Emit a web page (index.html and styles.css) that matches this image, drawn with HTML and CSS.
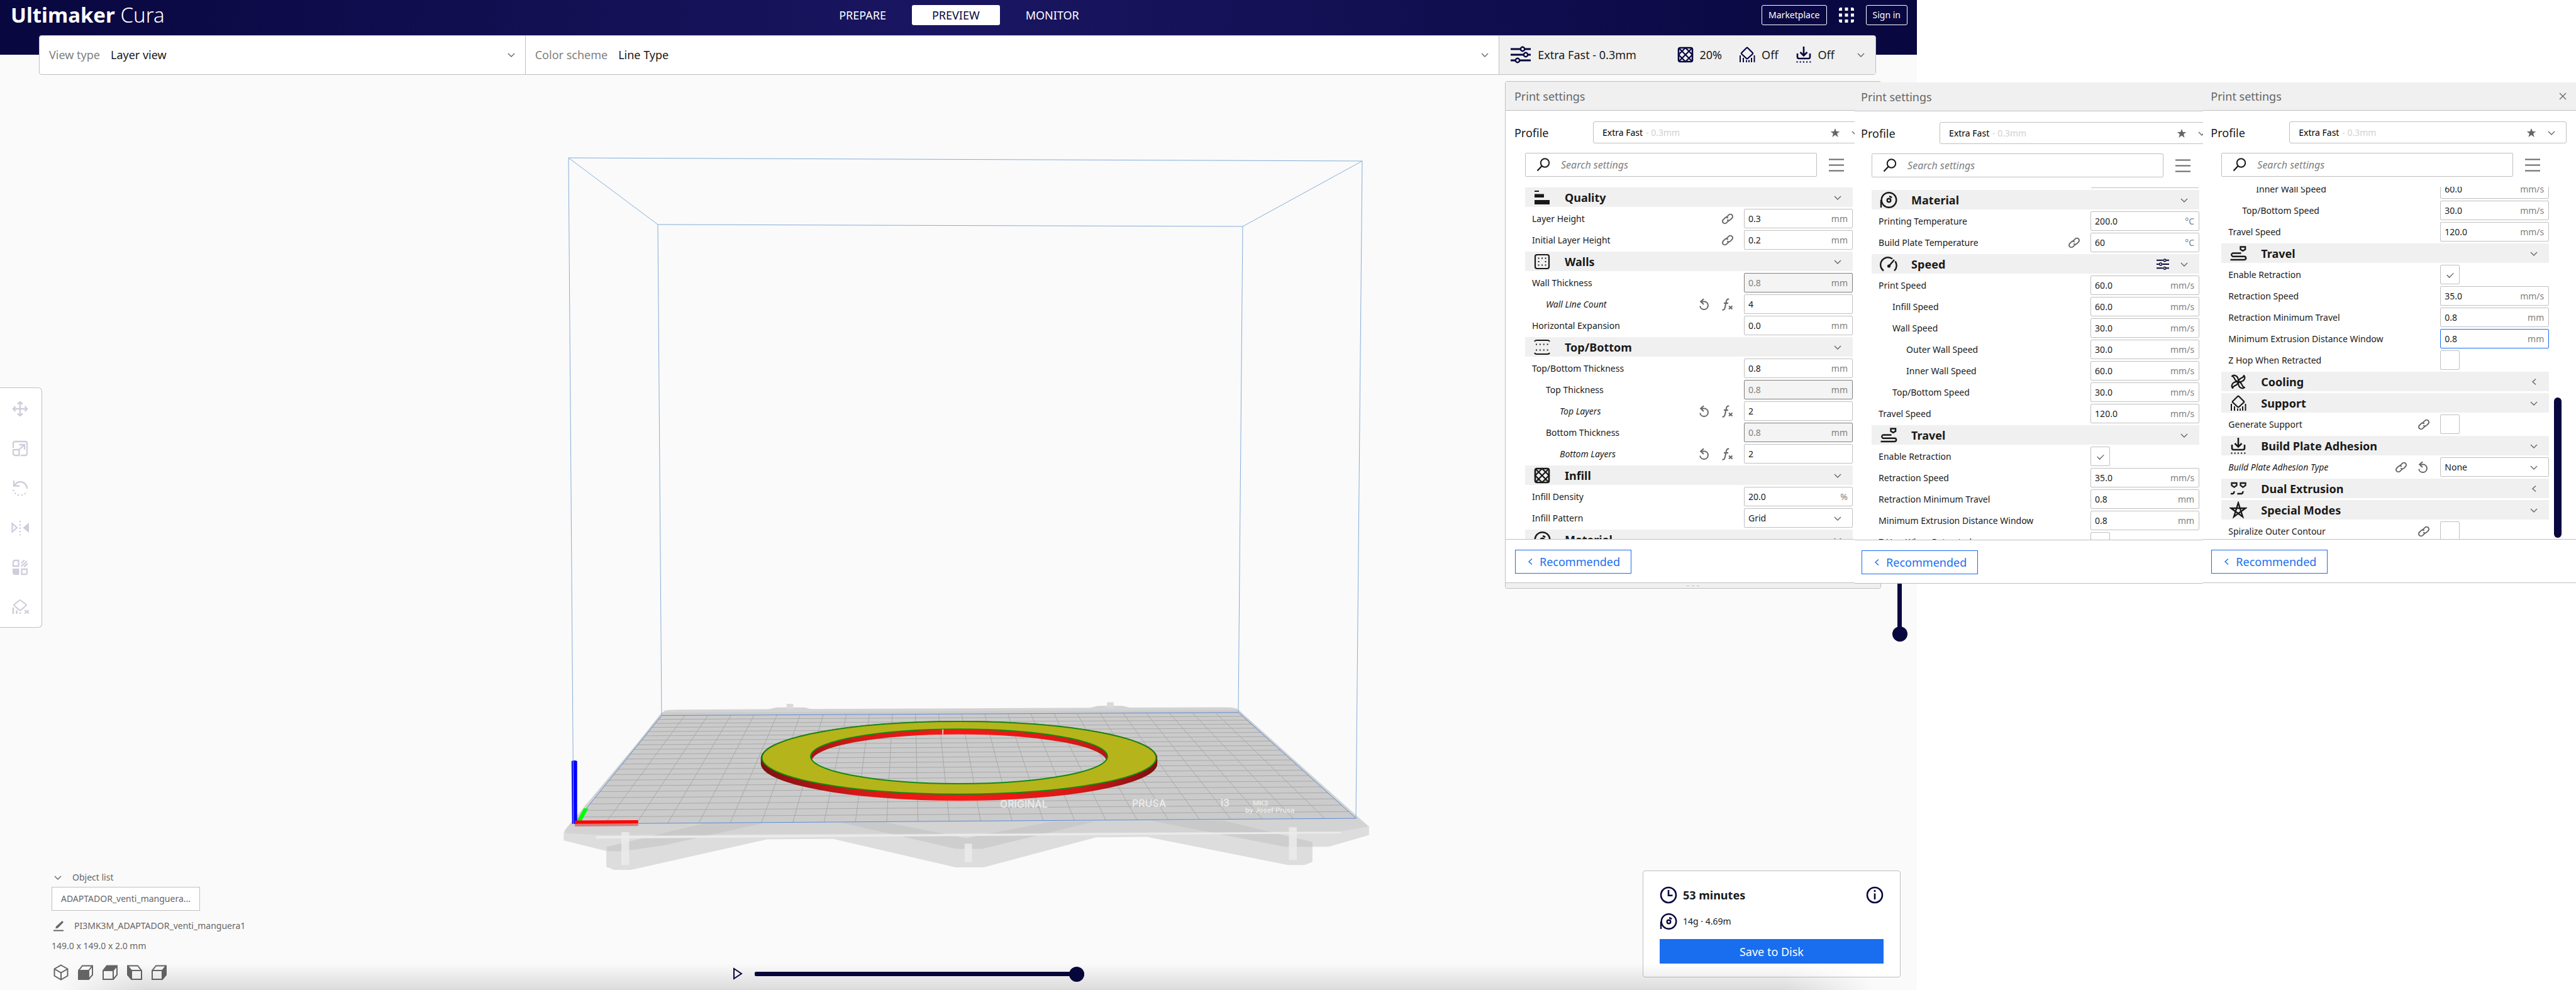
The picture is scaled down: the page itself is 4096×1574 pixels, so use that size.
FILE: index.html
```html
<!DOCTYPE html>
<html lang="en">
<head>
<meta charset="utf-8">
<title>Ultimaker Cura</title>
<link rel="stylesheet" href="styles.css">
<script src="scene.js" defer></script>
</head>
<body>
<svg class="sprite" aria-hidden="true">
  <symbol id="i-down" viewBox="0 0 12 12"><path d="M1 4l5 5 5-5" fill="none" stroke="currentColor" stroke-width="1.4"/></symbol>
  <symbol id="i-left" viewBox="0 0 12 12"><path d="M9 1.5L4 6l5 4.500" fill="none" stroke="currentColor" stroke-width="1.4"/></symbol>
  <symbol id="i-close" viewBox="0 0 12 12"><path d="M1 1l10 10M11 1L1 11" fill="none" stroke="currentColor" stroke-width="1.300"/></symbol>
  <symbol id="i-star" viewBox="0 0 16 16"><path d="M8 1l2 5h5.300l-4.200 3.300L12.600 15 8 11.500 3.400 15l1.500-5.700L.700 6H6z" fill="currentColor"/></symbol>
  <symbol id="i-search" viewBox="0 0 24 24"><circle cx="14.500" cy="9" r="6.700" fill="none" stroke="currentColor" stroke-width="2"/><path d="M9.500 14L2.500 21.500" stroke="currentColor" stroke-width="2.200"/></symbol>
  <symbol id="i-menu" viewBox="0 0 24 24"><path d="M0 3.500h24M0 12.500h24M0 21.500h24" stroke="currentColor" stroke-width="2"/></symbol>
  <symbol id="i-link" viewBox="0 0 20 20"><g fill="none" stroke="currentColor" stroke-width="1.900" stroke-linecap="round"><path d="M8.300 7.200l3.400-3.400a3.600 3.600 0 0 1 5.300 0 3.500 3.500 0 0 1 0 5l-2.600 2.600a3.600 3.600 0 0 1-4.600.300"/><path d="M11.700 12.800l-3.400 3.400a3.600 3.600 0 0 1-5.300 0 3.500 3.500 0 0 1 0-5l2.600-2.600a3.600 3.600 0 0 1 4.600-.300"/></g></symbol>
  <symbol id="i-reset" viewBox="0 0 20 20"><path d="M3 5.600h7.500a6.400 6.400 0 1 1-8.300 7" fill="none" stroke="currentColor" stroke-width="2"/><path d="M8 1.200L3.200 5.600 8 10" fill="none" stroke="currentColor" stroke-width="2"/></symbol>
  <symbol id="i-fx" viewBox="0 0 20 20"><g fill="none" stroke="currentColor" stroke-width="2"><path d="M1.500 18.600c3 .600 3.800-1 4.500-4.400l1.900-8.900c.500-2.800 1.600-4.200 4.400-3.500M4 8h7"/><path d="M12 12.500l5.500 5M17.500 12.500l-5.500 5"/></g></symbol>
  <symbol id="i-sliders" viewBox="0 0 32 28"><g fill="none" stroke="currentColor" stroke-width="3"><path d="M0 5h15M23 5h9M0 14h20M28 14h4M0 23h7M15 23h17"/><circle cx="19" cy="5" r="3.200" stroke-width="2.400"/><circle cx="24" cy="14" r="3.200" stroke-width="2.400"/><circle cx="11" cy="23" r="3.200" stroke-width="2.400"/></g></symbol>
  <symbol id="i-tune" viewBox="0 0 32 28"><g fill="none" stroke="currentColor" stroke-width="3"><path d="M0 4h16M25 4h7M0 14h6M15 14h17M0 24h16M25 24h7"/><circle cx="21" cy="4" r="3" stroke-width="2.400"/><circle cx="10.500" cy="14" r="3.200" stroke-width="2.400"/><circle cx="21" cy="24" r="3" stroke-width="2.400"/></g></symbol>
  <symbol id="i-apps" viewBox="0 0 24 24"><path d="M0 5V3a3 3 0 0 1 3-3h2v5zM9.500 0h5v5h-5zM19 0h2a3 3 0 0 1 3 3v2h-5zM0 9.500h5v5H0zM9.500 9.500h5v5h-5zM19 9.500h5v5h-5zM0 19h5v5H3a3 3 0 0 1-3-3zM9.500 19h5v5h-5zM19 19h5v2a3 3 0 0 1-3 3h-2z" fill="currentColor"/></symbol>
  <symbol id="i-quality" viewBox="0 0 28 28"><path d="M2 3h7v2H2zM2 8.500h15V14H2zM2 18h24v7H2z" fill="currentColor"/></symbol>
  <symbol id="i-walls" viewBox="0 0 28 28"><rect x="3" y="3" width="22" height="22" rx="3" fill="none" stroke="currentColor" stroke-width="2.200"/><path d="M7.600 8.500h13M7.600 19.500h13" stroke="currentColor" stroke-width="1.900" stroke-dasharray="1.900 3.600"/><path d="M8.500 13v2M19.600 13v2" stroke="currentColor" stroke-width="1.900"/></symbol>
  <symbol id="i-topbottom" viewBox="0 0 28 28"><path d="M2 5q1-2 3-2h18q2 0 3 2M2 23q1 2 3 2h18q2 0 3-2" fill="none" stroke="currentColor" stroke-width="2.200"/><path d="M4 9.500h20M4 18.500h20" stroke="currentColor" stroke-width="1.900" stroke-dasharray="1.900 4"/></symbol>
  <symbol id="i-infill" viewBox="0 0 28 28"><rect x="3" y="3" width="22" height="22" rx="2.500" fill="none" stroke="currentColor" stroke-width="2.600"/><path d="M3 14L14 3l11 11-11 11zM4 4l20 20M24 4L4 24" fill="none" stroke="currentColor" stroke-width="2.200"/></symbol>
  <symbol id="i-material" viewBox="0 0 28 28"><g fill="none" stroke="currentColor"><circle cx="14.500" cy="14" r="11.800" stroke-width="2.400"/><path d="M2 14v12" stroke-width="2.400"/><circle cx="14.500" cy="14.500" r="2.800" stroke-width="2.400"/><path d="M15 8.300q2.500.200 4 2" stroke-width="2.600"/></g></symbol>
  <symbol id="i-speed" viewBox="0 0 28 28"><g fill="none" stroke="currentColor" stroke-width="2.400"><path d="M6 24.500A11.500 11.500 0 0 1 20 5.500M24.500 9.500A11.500 11.500 0 0 1 23 24.500"/><path d="M15 16.500L23 7"/></g><circle cx="14.500" cy="17" r="2.600" fill="currentColor"/></symbol>
  <symbol id="i-travel" viewBox="0 0 28 28"><g fill="none" stroke="currentColor" stroke-width="2.400"><path d="M17.500 3.500h7.600v4l-3.800 2.300-3.800-2.300zM18.500 13.500H5a2.800 2.800 0 0 0 0 5.200h18.500a2.500 2.500 0 0 1 0 5.300H1.500"/></g></symbol>
  <symbol id="i-cooling" viewBox="0 0 28 28"><g fill="none" stroke="currentColor" stroke-width="2.200" stroke-linejoin="round"><path d="M14 14C14.500 9 12.500 4.500 8.500 3.800 6.500 3.500 5 4 4 5 7 5.500 7.500 8 8.500 10 9.500 12.200 11.500 13.500 14 14z"/><path transform="rotate(90 14 14)" d="M14 14C14.500 9 12.500 4.500 8.500 3.800 6.500 3.500 5 4 4 5 7 5.500 7.500 8 8.500 10 9.500 12.200 11.500 13.500 14 14z"/><path transform="rotate(180 14 14)" d="M14 14C14.500 9 12.500 4.500 8.500 3.800 6.500 3.500 5 4 4 5 7 5.500 7.500 8 8.500 10 9.500 12.200 11.500 13.500 14 14z"/><path transform="rotate(270 14 14)" d="M14 14C14.500 9 12.500 4.500 8.500 3.800 6.500 3.500 5 4 4 5 7 5.500 7.500 8 8.500 10 9.500 12.200 11.500 13.500 14 14z"/></g></symbol>
  <symbol id="i-support" viewBox="0 0 28 28"><path d="M13 3.200q1-.900 2 0l7.800 7.800q.800.900 0 1.800L15 20q-1 .900-2 0l-7.800-7.200q-.800-.900 0-1.800z" fill="none" stroke="currentColor" stroke-width="2.200"/><path d="M3 15v11M8 19v7M13 22.500V26M17 22.500V26M21 19v7M25.500 15v11" stroke="currentColor" stroke-width="2"/></symbol>
  <symbol id="i-adhesion" viewBox="0 0 28 28"><path d="M14 1v13M8.500 10l5.500 5.500 5.500-5.500M4 12v5.500q0 2.500 2.500 2.500h15q2.500 0 2.500-2.500V12" fill="none" stroke="currentColor" stroke-width="2.600"/><path d="M2.400 25.500h24" stroke="currentColor" stroke-width="2.200" stroke-dasharray="2.200 3"/></symbol>
  <symbol id="i-dual" viewBox="0 0 28 28"><g fill="none" stroke="currentColor" stroke-width="2.300"><path d="M3.500 5h8v3.600l-4 3-4-3zM17.500 5h8v3.600l-4 3-4-3zM2 22h3q2.500 0 2.500-4M12.500 22H19q2.500 0 2.500-4"/></g></symbol>
  <symbol id="i-special" viewBox="0 0 28 28"><path d="M14 2.500L7 24.500 25.500 11H2.500L21 24.500z" fill="none" stroke="currentColor" stroke-width="2.400"/></symbol>
  <symbol id="i-move" viewBox="0 0 28 28"><path d="M14 3v22M3 14h22M10 6.500L14 3l4 3.500M10 21.500l4 3.500 4-3.500M6.500 10L3 14l3.500 4M21.500 10l3.500 4-3.500 4" fill="none" stroke="currentColor" stroke-width="2.400"/></symbol>
  <symbol id="i-scale" viewBox="0 0 28 28"><path d="M3 13V6q0-3 3-3h16q3 0 3 3v16q0 3-3 3h-7M3 16h9.500v9H6q-3 0-3-3zM12 16l9-8M12.500 8H21v8" fill="none" stroke="currentColor" stroke-width="2.300"/></symbol>
  <symbol id="i-rotate" viewBox="0 0 28 28"><path d="M4 2v8.500h9M4.500 10Q9 4 14.500 4q9 .500 11 11" fill="none" stroke="currentColor" stroke-width="2.400"/><path d="M3 16.500q2 8 11 9 8 0 10.500-7" fill="none" stroke="currentColor" stroke-width="2.400" stroke-dasharray="2.200 3.400"/></symbol>
  <symbol id="i-mirror" viewBox="0 0 28 28"><path d="M1.500 7.500v13l7.500-6.500z" fill="none" stroke="currentColor" stroke-width="2.200"/><path d="M28 6v16l-9.500-8z" fill="currentColor"/><path d="M14 3v23" stroke="currentColor" stroke-width="2.400" stroke-dasharray="2.400 2.900"/></symbol>
  <symbol id="i-mesh" viewBox="0 0 28 28"><path d="M3 12V6q0-3 3-3h5.500v9zM16.500 17H25v5q0 3-3 3h-5.500z" fill="none" stroke="currentColor" stroke-width="2.300"/><path d="M2 16h10.500v10H6q-4 0-4-4z" fill="currentColor"/><path d="M15.500 7.500L21 2.500M15.500 12.500L25 4M20 13l6-5" stroke="currentColor" stroke-width="2.300"/></symbol>
  <symbol id="i-blocker" viewBox="0 0 28 28"><path d="M13 3.500q1-.900 2 0l8.500 6.700q.800.800 0 1.600L15 19q-1 .900-2 0l-8.500-7.200q-.800-.800 0-1.600z" fill="none" stroke="currentColor" stroke-width="2.200"/><path d="M3 15v10M8.500 19.500V25M14 22.500V25" stroke="currentColor" stroke-width="2.600"/><path d="M21 19l7 5.500M28 19l-7 5.500" stroke="currentColor" stroke-width="2.200"/></symbol>
  <symbol id="i-pencil" viewBox="0 0 18 18"><path d="M1 16.500h16" stroke="currentColor" stroke-width="2"/><path d="M15 1l2 2.200L8 12.500l-3.800.800L5 10z" fill="currentColor"/></symbol>
  <symbol id="i-cube" viewBox="0 0 28 28"><path d="M14 2.500L24.500 8.500v11L14 25.500 3.500 19.500v-11zM3.500 8.500L14 14.500l10.500-6M14 14.500v11" fill="none" stroke="currentColor" stroke-width="2"/></symbol>
  <symbol id="i-front" viewBox="0 0 28 28"><path d="M3 11l6-7.500h16V18l-6 7H3zM3 11h16v14M19 11l6-7.500" fill="none" stroke="currentColor" stroke-width="2"/><path d="M3 11h16v14H3z" fill="currentColor"/></symbol>
  <symbol id="i-top" viewBox="0 0 28 28"><path d="M3 11l6-7.500h16V18l-6 7H3zM3 11h16v14M19 11l6-7.500" fill="none" stroke="currentColor" stroke-width="2"/><path d="M3 11l6-7.500h16L19 11z" fill="currentColor"/></symbol>
  <symbol id="i-leftside" viewBox="0 0 28 28"><path d="M25 11l-6-7.500H3V18l6 7h16zM25 11H9v14M9 11L3 3.500" fill="none" stroke="currentColor" stroke-width="2"/><path d="M9 11L3 3.500V18l6 7z" fill="currentColor"/></symbol>
  <symbol id="i-rightside" viewBox="0 0 28 28"><path d="M3 11l6-7.500h16V18l-6 7H3zM3 11h16v14M19 11l6-7.500" fill="none" stroke="currentColor" stroke-width="2"/><path d="M19 11l6-7.500V18l-6 7z" fill="currentColor"/></symbol>
  <symbol id="i-clock" viewBox="0 0 28 28"><circle cx="14" cy="14" r="12" fill="none" stroke="currentColor" stroke-width="2.600"/><path d="M14 6v8.700h6.500" fill="none" stroke="currentColor" stroke-width="2.600"/></symbol>
  <symbol id="i-info" viewBox="0 0 28 28"><circle cx="14" cy="14" r="12" fill="none" stroke="currentColor" stroke-width="2.600"/><path d="M14 6v3M14 11.500V21" stroke="currentColor" stroke-width="2.600"/></symbol>
  <symbol id="i-play" viewBox="0 0 16 20"><path d="M2 2l12 8L2 18z" fill="none" stroke="currentColor" stroke-width="2"/></symbol>
</svg>

<div class="desktop">
<div class="app">
  <header class="top">
    <h1 class="logo"><b>Ultimaker</b> <span>Cura</span></h1>
    <nav class="stages">
      <a href="#prepare">PREPARE</a>
      <a href="#preview" class="active" aria-current="page">PREVIEW</a>
      <a href="#monitor">MONITOR</a>
    </nav>
    <div class="account">
      <button type="button" class="outline">Marketplace</button>
      <button type="button" class="bare" aria-label="Applications"><svg class="s24"><use href="#i-apps"/></svg></button>
      <button type="button" class="outline">Sign in</button>
    </div>
  </header>

  <div class="stage-bar">
    <div class="cell view-type">
      <label for="view-type">View type</label>
      <select id="view-type"><option>Layer view</option></select>
      <svg class="s12"><use href="#i-down"/></svg>
    </div>
    <div class="cell scheme">
      <label for="scheme">Color scheme</label>
      <select id="scheme"><option>Line Type</option></select>
      <svg class="s12"><use href="#i-down"/></svg>
    </div>
    <button type="button" class="summary">
      <svg class="sliders"><use href="#i-sliders"/></svg>
      <span class="name">Extra Fast - 0.3mm</span>
      <svg class="s28"><use href="#i-infill"/></svg><span class="val">20%</span>
      <svg class="s28"><use href="#i-support"/></svg><span class="val">Off</span>
      <svg class="s28"><use href="#i-adhesion"/></svg><span class="val last">Off</span>
      <svg class="s12"><use href="#i-down"/></svg>
    </button>
  </div>

  <svg class="scene" viewBox="0 0 3048 1574" role="img" aria-label="Sliced model on the build plate">
    <defs>
      <linearGradient id="wall" x1="0" x2="1"><stop offset="0" stop-color="#7d1010"/><stop offset=".25" stop-color="#d81818"/><stop offset=".5" stop-color="#ff1616"/><stop offset=".8" stop-color="#d81818"/><stop offset="1" stop-color="#7d1010"/></linearGradient>
      <pattern id="skin" width="4" height="3" patternUnits="userSpaceOnUse"><rect width="4" height="3" fill="#c3c017"/><path d="M0 0h4" stroke="#9c9c22" stroke-width="2"/></pattern>
    </defs>
    <g transform="translate(850 1081) scale(.8905 .3144)">
      <path d="M52 768V812L128 865V945L142 961H172L415 806 533 804 752 948H802L1003 796 1093 794 1345 936H1375L1389 920V844H1418L1490 785V738L1400 690H100z" fill="#dddddd"/>
      <path d="M415 150L432 139H482L498 150zM990 142L1006 131H1050L1066 142z" fill="#d2d2d2"/>
      <path d="M450 121h12v37h-12zM1022 113h12v37h-12z" fill="#dadada"/>
      <path d="M232 155Q238 150 262 150L1235 138Q1254 138 1258 154L1486 732Q1492 742 1480 746L1440 766 120 784 60 776Q50 770 56 752z" fill="#d3d3d3"/>
      <path d="M227 165L1257 152 1467 700 70 728z" fill="#cbcbcb"/>
      <path d="M305 724H410L232 836 160 866H130L128 845zM545 720H625L770 800 925 716H1000L800 854H752zM1100 712H1230L1389 820V844H1340z" fill="#bdbdbd" opacity=".45"/>
      <path d="M110 790L1440 768V776L110 802z" fill="#ebebeb"/>
      <path d="M155 770h14v166h-14zM768 828h13v94h-13zM1347 745h14v165h-14z" fill="#ebebeb" opacity=".85"/>
      <path id="grid" fill="none" stroke="#a9a9a9" stroke-width="1" vector-effect="non-scaling-stroke"/>
      <path d="M227 180L1257 165 1467 700 70 728z" fill="none" stroke="#5c8cd6" stroke-width="1" vector-effect="non-scaling-stroke"/>
      <path fill-rule="evenodd" fill="url(#wall)" d="M404 394V424A354 187 0 0 0 1112 424V394A354 187 0 0 0 404 394zM495 412A263 137 0 0 1 1021 412A263 137 0 0 1 495 412z"/>
      <path fill-rule="evenodd" fill="url(#skin)" stroke="#128a12" stroke-width="2" vector-effect="non-scaling-stroke" d="M406 394A352 184 0 0 0 1110 394A352 184 0 0 0 406 394zM493 387A265 138 0 0 0 1023 387A265 138 0 0 0 493 387z"/>
      <path d="M729 250V275" stroke="#fff" stroke-width="1.500"/>
      <path d="M80 712L92 650" stroke="#0f0" stroke-width="8"/>
      <path d="M66 410Q71 404 76 410V728H67z" fill="#00f"/>
      <path d="M72 727H185V739L72 741z" fill="#d77a7a"/>
      <path d="M72 711L185 709V725L72 728z" fill="#f00"/>
    </g>
    <path d="M912 1310L904 251 2166 256 2156 1301M1052 1137L1046 357 1976 360 1969 1132M904 251L1046 357M2166 256L1976 360" fill="none" stroke="#86add9" stroke-width="1"/>
    <g class="brand">
      <text class="big" x="1590" y="1284">ORIGINAL</text><text class="big" x="1800" y="1283">PRUSA</text><text class="big" x="1941" y="1282">i3</text><text x="1992" y="1281">MK3</text>
      <text x="1980" y="1292">by Josef Prusa</text>
    </g>
  </svg>

  <div class="tools" role="toolbar" aria-label="Tools">
    <button type="button" aria-label="Move"><svg class="s28"><use href="#i-move"/></svg></button>
    <button type="button" aria-label="Scale"><svg class="s28"><use href="#i-scale"/></svg></button>
    <button type="button" aria-label="Rotate"><svg class="s28"><use href="#i-rotate"/></svg></button>
    <button type="button" aria-label="Mirror"><svg class="s28"><use href="#i-mirror"/></svg></button>
    <button type="button" aria-label="Per model settings"><svg class="s28"><use href="#i-mesh"/></svg></button>
    <button type="button" aria-label="Support blocker"><svg class="s28"><use href="#i-blocker"/></svg></button>
  </div>

  <input class="layer-slider" type="range" min="0" max="7" value="0" aria-label="Layer">

  <section class="panel first" aria-label="Print settings">
    <header class="panel-head"><h2>Print settings</h2></header>
    <div class="profile"><label for="a-profile">Profile</label>
      <div class="pick"><select id="a-profile"><option>Extra Fast</option></select><span class="detail">- 0.3mm</span><svg class="s16"><use href="#i-star"/></svg><svg class="s12"><use href="#i-down"/></svg></div></div>
    <div class="find"><div class="search"><svg class="s24"><use href="#i-search"/></svg><input type="text" placeholder="Search settings" aria-label="Search settings"></div>
      <button type="button" class="bare" aria-label="Visibility"><svg class="s24"><use href="#i-menu"/></svg></button></div>
    <div class="list"><div class="rows start">
      <div class="cat"><svg class="s28"><use href="#i-quality"/></svg><h3>Quality</h3><svg class="s12"><use href="#i-down"/></svg></div>
      <div class="row"><label for="a1">Layer Height</label><span class="marks"><svg><use href="#i-link"/></svg></span><span class="field"><input id="a1" value="0.3"><span>mm</span></span></div>
      <div class="row"><label for="a2">Initial Layer Height</label><span class="marks"><svg><use href="#i-link"/></svg></span><span class="field"><input id="a2" value="0.2"><span>mm</span></span></div>
      <div class="cat"><svg class="s28"><use href="#i-walls"/></svg><h3>Walls</h3><svg class="s12"><use href="#i-down"/></svg></div>
      <div class="row"><label for="a3">Wall Thickness</label><span class="field off"><input id="a3" value="0.8" disabled><span>mm</span></span></div>
      <div class="row in1 edited"><label for="a4">Wall Line Count</label><span class="marks"><svg><use href="#i-reset"/></svg><svg><use href="#i-fx"/></svg></span><span class="field"><input id="a4" value="4"></span></div>
      <div class="row"><label for="a5">Horizontal Expansion</label><span class="field"><input id="a5" value="0.0"><span>mm</span></span></div>
      <div class="cat"><svg class="s28"><use href="#i-topbottom"/></svg><h3>Top/Bottom</h3><svg class="s12"><use href="#i-down"/></svg></div>
      <div class="row"><label for="a6">Top/Bottom Thickness</label><span class="field"><input id="a6" value="0.8"><span>mm</span></span></div>
      <div class="row in1"><label for="a7">Top Thickness</label><span class="field off"><input id="a7" value="0.8" disabled><span>mm</span></span></div>
      <div class="row in2 edited"><label for="a8">Top Layers</label><span class="marks"><svg><use href="#i-reset"/></svg><svg><use href="#i-fx"/></svg></span><span class="field"><input id="a8" value="2"></span></div>
      <div class="row in1"><label for="a9">Bottom Thickness</label><span class="field off"><input id="a9" value="0.8" disabled><span>mm</span></span></div>
      <div class="row in2 edited"><label for="a10">Bottom Layers</label><span class="marks"><svg><use href="#i-reset"/></svg><svg><use href="#i-fx"/></svg></span><span class="field"><input id="a10" value="2"></span></div>
      <div class="cat"><svg class="s28"><use href="#i-infill"/></svg><h3>Infill</h3><svg class="s12"><use href="#i-down"/></svg></div>
      <div class="row"><label for="a11">Infill Density</label><span class="field"><input id="a11" value="20.0"><span>%</span></span></div>
      <div class="row"><label for="a12">Infill Pattern</label><span class="field menu"><select id="a12"><option>Grid</option></select><svg class="s12"><use href="#i-down"/></svg></span></div>
      <div class="cat"><svg class="s28"><use href="#i-material"/></svg><h3>Material</h3><svg class="s12"><use href="#i-down"/></svg></div>
    </div></div>
    <footer class="panel-foot"><button type="button" class="recommended"><svg class="s12"><use href="#i-left"/></svg>Recommended</button></footer>
    <div class="grip"><i></i><i></i><i></i></div>
  </section>

  <div class="bottom">
    <section class="objects">
      <button type="button" class="toggle"><svg class="s12"><use href="#i-down"/></svg>Object list</button>
      <button type="button" class="object">ADAPTADOR_venti_manguera...</button>
      <div class="job"><svg class="s18"><use href="#i-pencil"/></svg>PI3MK3M_ADAPTADOR_venti_manguera1</div>
      <div class="dims">149.0 x 149.0 x 2.0 mm</div>
      <div class="views">
        <button type="button" class="bare" aria-label="3D view"><svg class="s28"><use href="#i-cube"/></svg></button>
        <button type="button" class="bare" aria-label="Front view"><svg class="s28"><use href="#i-front"/></svg></button>
        <button type="button" class="bare" aria-label="Top view"><svg class="s28"><use href="#i-top"/></svg></button>
        <button type="button" class="bare" aria-label="Left view"><svg class="s28"><use href="#i-leftside"/></svg></button>
        <button type="button" class="bare" aria-label="Right view"><svg class="s28"><use href="#i-rightside"/></svg></button>
      </div>
    </section>
    <div class="player">
      <button type="button" class="bare" aria-label="Play"><svg class="play"><use href="#i-play"/></svg></button>
      <input type="range" min="0" max="100" value="100" aria-label="Path">
    </div>
    <section class="save">
      <div class="line strong"><svg class="s28"><use href="#i-clock"/></svg>53 minutes<svg class="s28 end"><use href="#i-info"/></svg></div>
      <div class="line"><svg class="s28"><use href="#i-material"/></svg>14g · 4.69m</div>
      <button type="button" class="primary">Save to Disk</button>
    </section>
  </div>
  <div class="shade"></div>
</div>

<div class="shot second">
  <section class="panel" aria-label="Print settings, middle of the list">
    <header class="panel-head"><h2>Print settings</h2></header>
    <div class="profile"><label for="b-profile">Profile</label>
      <div class="pick"><select id="b-profile"><option>Extra Fast</option></select><span class="detail">- 0.3mm</span><svg class="s16"><use href="#i-star"/></svg><svg class="s12"><use href="#i-down"/></svg></div></div>
    <div class="find"><div class="search"><svg class="s24"><use href="#i-search"/></svg><input type="text" placeholder="Search settings" aria-label="Search settings"></div>
      <button type="button" class="bare" aria-label="Visibility"><svg class="s24"><use href="#i-menu"/></svg></button></div>
    <div class="list"><div class="rows middle">
      <div class="row"><span></span><span class="field menu"></span></div>
      <div class="cat"><svg class="s28"><use href="#i-material"/></svg><h3>Material</h3><svg class="s12"><use href="#i-down"/></svg></div>
      <div class="row"><label for="b1">Printing Temperature</label><span class="field"><input id="b1" value="200.0"><span>°C</span></span></div>
      <div class="row"><label for="b2">Build Plate Temperature</label><span class="marks"><svg><use href="#i-link"/></svg></span><span class="field"><input id="b2" value="60"><span>°C</span></span></div>
      <div class="cat"><svg class="s28"><use href="#i-speed"/></svg><h3>Speed</h3><svg class="tune"><use href="#i-tune"/></svg><svg class="s12"><use href="#i-down"/></svg></div>
      <div class="row"><label for="b3">Print Speed</label><span class="field"><input id="b3" value="60.0"><span>mm/s</span></span></div>
      <div class="row in1"><label for="b4">Infill Speed</label><span class="field"><input id="b4" value="60.0"><span>mm/s</span></span></div>
      <div class="row in1"><label for="b5">Wall Speed</label><span class="field"><input id="b5" value="30.0"><span>mm/s</span></span></div>
      <div class="row in2"><label for="b6">Outer Wall Speed</label><span class="field"><input id="b6" value="30.0"><span>mm/s</span></span></div>
      <div class="row in2"><label for="b7">Inner Wall Speed</label><span class="field"><input id="b7" value="60.0"><span>mm/s</span></span></div>
      <div class="row in1"><label for="b8">Top/Bottom Speed</label><span class="field"><input id="b8" value="30.0"><span>mm/s</span></span></div>
      <div class="row"><label for="b9">Travel Speed</label><span class="field"><input id="b9" value="120.0"><span>mm/s</span></span></div>
      <div class="cat"><svg class="s28"><use href="#i-travel"/></svg><h3>Travel</h3><svg class="s12"><use href="#i-down"/></svg></div>
      <div class="row"><label for="b10">Enable Retraction</label><input class="check" type="checkbox" id="b10" checked></div>
      <div class="row"><label for="b11">Retraction Speed</label><span class="field"><input id="b11" value="35.0"><span>mm/s</span></span></div>
      <div class="row"><label for="b12">Retraction Minimum Travel</label><span class="field"><input id="b12" value="0.8"><span>mm</span></span></div>
      <div class="row"><label for="b13">Minimum Extrusion Distance Window</label><span class="field"><input id="b13" value="0.8"><span>mm</span></span></div>
      <div class="row"><label for="b14">Z Hop When Retracted</label><input class="check" type="checkbox" id="b14"></div>
    </div></div>
    <footer class="panel-foot"><button type="button" class="recommended"><svg class="s12"><use href="#i-left"/></svg>Recommended</button></footer>
  </section>
</div>

<div class="shot third">
  <section class="panel" aria-label="Print settings, end of the list">
    <header class="panel-head"><h2>Print settings</h2><button type="button" class="bare" aria-label="Close"><svg class="s12"><use href="#i-close"/></svg></button></header>
    <div class="profile"><label for="c-profile">Profile</label>
      <div class="pick"><select id="c-profile"><option>Extra Fast</option></select><span class="detail">- 0.3mm</span><svg class="s16"><use href="#i-star"/></svg><svg class="s12"><use href="#i-down"/></svg></div></div>
    <div class="find"><div class="search"><svg class="s24"><use href="#i-search"/></svg><input type="text" placeholder="Search settings" aria-label="Search settings"></div>
      <button type="button" class="bare" aria-label="Visibility"><svg class="s24"><use href="#i-menu"/></svg></button></div>
    <div class="list"><div class="rows finish">
      <div class="row in2"><label for="c1">Inner Wall Speed</label><span class="field"><input id="c1" value="60.0"><span>mm/s</span></span></div>
      <div class="row in1"><label for="c2">Top/Bottom Speed</label><span class="field"><input id="c2" value="30.0"><span>mm/s</span></span></div>
      <div class="row"><label for="c3">Travel Speed</label><span class="field"><input id="c3" value="120.0"><span>mm/s</span></span></div>
      <div class="cat"><svg class="s28"><use href="#i-travel"/></svg><h3>Travel</h3><svg class="s12"><use href="#i-down"/></svg></div>
      <div class="row"><label for="c4">Enable Retraction</label><input class="check" type="checkbox" id="c4" checked></div>
      <div class="row"><label for="c5">Retraction Speed</label><span class="field"><input id="c5" value="35.0"><span>mm/s</span></span></div>
      <div class="row"><label for="c6">Retraction Minimum Travel</label><span class="field"><input id="c6" value="0.8"><span>mm</span></span></div>
      <div class="row"><label for="c7">Minimum Extrusion Distance Window</label><span class="field focus"><input id="c7" value="0.8"><span>mm</span></span></div>
      <div class="row"><label for="c8">Z Hop When Retracted</label><input class="check" type="checkbox" id="c8"></div>
      <div class="cat"><svg class="s28"><use href="#i-cooling"/></svg><h3>Cooling</h3><svg class="s12"><use href="#i-left"/></svg></div>
      <div class="cat"><svg class="s28"><use href="#i-support"/></svg><h3>Support</h3><svg class="s12"><use href="#i-down"/></svg></div>
      <div class="row"><label for="c9">Generate Support</label><span class="marks"><svg><use href="#i-link"/></svg></span><input class="check" type="checkbox" id="c9"></div>
      <div class="cat"><svg class="s28"><use href="#i-adhesion"/></svg><h3>Build Plate Adhesion</h3><svg class="s12"><use href="#i-down"/></svg></div>
      <div class="row edited"><label for="c10">Build Plate Adhesion Type</label><span class="marks"><svg><use href="#i-link"/></svg><svg><use href="#i-reset"/></svg></span><span class="field menu"><select id="c10"><option>None</option></select><svg class="s12"><use href="#i-down"/></svg></span></div>
      <div class="cat"><svg class="s28"><use href="#i-dual"/></svg><h3>Dual Extrusion</h3><svg class="s12"><use href="#i-left"/></svg></div>
      <div class="cat"><svg class="s28"><use href="#i-special"/></svg><h3>Special Modes</h3><svg class="s12"><use href="#i-down"/></svg></div>
      <div class="row"><label for="c11">Spiralize Outer Contour</label><span class="marks"><svg><use href="#i-link"/></svg></span><input class="check" type="checkbox" id="c11"></div>
    </div><div class="thumb"></div></div>
    <footer class="panel-foot"><button type="button" class="recommended"><svg class="s12"><use href="#i-left"/></svg>Recommended</button></footer>
  </section>
</div>
</div>
</body>
</html>
```
FILE: scene.js
```js
// Draws the 10 mm grid of the 250 x 210 mm build plate in perspective.
const back = [[227, 180], [1257, 165]];
const front = [[70, 728], [1467, 700]];
const depth = 1.356;
const mix = (a, b, t) => [a[0] + (b[0] - a[0]) * t, a[1] + (b[1] - a[1]) * t];
let d = "";
for (let i = 1; i < 25; i++) {
  d += "M" + mix(back[0], back[1], i / 25) + "L" + mix(front[0], front[1], i / 25);
}
for (let j = 1; j < 21; j++) {
  const s = j / 21;
  const t = depth * s / (1 + (depth - 1) * s);
  d += "M" + mix(front[0], back[0], t) + "L" + mix(front[1], back[1], t);
}
document.getElementById("grid").setAttribute("d", d);
```
FILE: styles.css
```css
* { box-sizing: border-box; }

:root {
  --navy: #08073f;
  --blue: #196ef0;
  --line: #c0c0c0;
  --grey: #666;
  --bar: #f0f0f0;
  --text: #191919;
}

body {
  margin: 0;
  background: #fff;
  color: var(--text);
  font: 14px/20px "Noto Sans", "Open Sans", sans-serif;
}

h1, h2, h3 { margin: 0; font-weight: 400; }
button, input, select { font: inherit; color: inherit; margin: 0; padding: 0; }
button { cursor: pointer; }
select { appearance: none; border: 0; background: none; }
svg { display: block; flex: none; }
.sprite { position: absolute; width: 0; height: 0; }
.bare { border: 0; background: none; display: block; }

.s12 { width: 12px; height: 12px; color: var(--grey); }
.s16 { width: 16px; height: 16px; color: var(--grey); }
.s18 { width: 18px; height: 18px; }
.s24 { width: 24px; height: 24px; }
.s28 { width: 28px; height: 28px; }

.desktop { position: relative; min-height: 100vh; overflow: hidden; }

.app {
  position: relative;
  width: 74.414%;
  min-height: 100vh;
  background: #fafafa;
  overflow: hidden;
}

/* Title bar */
.top {
  display: grid;
  grid-template-columns: 1fr auto 1fr;
  padding: 8px 15px 46px 17px;
  background: linear-gradient(90deg, var(--navy), #191560 48%, #191560 52%, var(--navy));
  color: #fff;
}
.logo { font-size: 33px; line-height: 32px; height: 33px; white-space: nowrap; }
.logo span { font-weight: 300; }
.stages { display: flex; gap: 9px; font-size: 18px; line-height: 32px; height: 32px; }
.stages a { color: #fff; text-decoration: none; padding: 0 32px; border-radius: 3px; }
.stages .active { background: #fff; color: var(--navy); }
.account { display: flex; justify-content: flex-end; align-items: center; gap: 19px; height: 32px; }
.outline { height: 32px; padding: 0 10px; border: 1px solid #fff; border-radius: 3px; background: none; }

/* Stage bar */
.stage-bar {
  position: relative;
  z-index: 1;
  display: grid;
  grid-template-columns: 773fr 1549fr 598fr;
  height: 63px;
  margin: -31px 65px 0 62px;
  border: 1px solid var(--line);
  border-radius: 4px;
  background: #fff;
  font-size: 18px;
  line-height: 24px;
  overflow: hidden;
}
.cell { display: flex; align-items: center; padding: 0 16px 2px 15px; border-right: 1px solid var(--line); }
.cell label { color: #808080; }
.cell select { flex: 1; padding-left: 17px; }
.summary {
  display: flex; align-items: center;
  padding: 0 17px 2px 18px;
  border: 0; background: var(--bar);
  text-align: left;
}
.summary .sliders { width: 32px; height: 28px; margin-right: 11px; }
.summary > svg { color: var(--navy); }
.summary .name { flex: 1; }
.summary .val { margin: 0 26px 0 9px; }
.summary .last { margin-right: 36px; }
.summary > .s12 { color: var(--grey); }

.scene { position: absolute; left: 0; top: 0; width: 100%; }
.brand { font: 500 11px Inter, sans-serif; fill: #ececec; }
.brand .big { font-size: 16px; }

/* Tools */
.tools {
  position: absolute; left: 0; top: 616px;
  display: grid; grid-auto-rows: 63px;
  padding: 1px 2px 1px 0;
  border: 1px solid var(--line); border-left: 0;
  border-radius: 0 6px 6px 0;
  background: #fff;
}
.tools button { width: 64px; border: 0; background: none; display: grid; place-items: center; color: #cfcddc; }

/* Sliders */
input[type="range"] { appearance: none; background: none; }
input[type="range"]::-webkit-slider-runnable-track { background: var(--navy); border-radius: 2px; }
input[type="range"]::-webkit-slider-thumb { appearance: none; width: 24px; height: 24px; border-radius: 50%; background: var(--navy); }
.layer-slider {
  position: absolute; right: 15px; top: 560px;
  width: 24px; height: 460px;
  writing-mode: vertical-lr; direction: rtl;
}
.layer-slider::-webkit-slider-runnable-track { width: 7px; }
.layer-slider::-webkit-slider-thumb { margin-left: -8px; }
.player { display: flex; align-items: center; height: 24px; margin-bottom: -6px; }
.player .play { width: 16px; height: 20px; color: var(--navy); }
.player input { flex: 1; height: 24px; margin-left: 19px; }
.player input::-webkit-slider-runnable-track { height: 7px; }
.player input::-webkit-slider-thumb { margin-top: -8px; }

/* Settings panel */
.panel {
  width: 598px;
  border: 1px solid var(--line);
  border-radius: 3px;
  background: #fff;
}
.panel.first { position: absolute; right: 57px; top: 129px; z-index: 2; }
.shot { position: absolute; overflow: hidden; z-index: 3; }
.shot.second { left: 72%; top: 131px; width: 554px; height: 798px; }
.shot.second .panel { margin: -1px 0 0 -5px; }
.shot.third { left: 85.53%; right: 0; top: 131px; height: 797px; }
.shot.third .panel { margin: -2px 0 0 -3px; }

.panel-head {
  display: flex; justify-content: space-between; align-items: center;
  height: 46px; padding: 0 16px 0 14px;
  border-bottom: 1px solid var(--line);
  background: var(--bar);
}
.panel-head h2 { font-size: 18px; line-height: 24px; color: var(--grey); }
.profile { display: grid; grid-template-columns: 125px 441px; align-items: center; height: 35px; margin: 17px 0 15px 14px; font-size: 18px; }
.pick {
  display: flex; align-items: center; height: 35px; padding: 0 17px 0 14px;
  border: 1px solid var(--line); border-radius: 3px; font-size: 14px;
}
.pick select { color: #000; }
.detail { color: #d0d0d0; margin-left: 4px; flex: 1; }
.pick .s16 { margin-right: 18px; }
.find { display: flex; align-items: center; gap: 19px; margin-left: 31px; }
.search { display: flex; align-items: center; width: 464px; height: 38px; padding-left: 16px; border: 1px solid var(--line); border-radius: 2px; }
.search input { flex: 1; border: 0; background: none; margin-left: 16px; font-size: 16px; font-style: italic; }
.search input::placeholder { color: #808080; opacity: 1; }
.find .bare { color: var(--grey); }

.list { display: grid; grid-template-columns: 521px 12px; column-gap: 8px; height: 560px; margin: 16px 0 0 31px; overflow: hidden; }
.rows { display: grid; grid-auto-rows: 31px; row-gap: 3px; align-content: start; }
.rows.start { margin-top: 1px; }
.rows.middle { margin-top: -30px; }
.rows.finish { margin-top: -12px; }
.thumb { height: 223px; margin-top: 335px; border-radius: 6px; background: var(--navy); }

.cat { display: flex; align-items: center; padding: 0 18px 0 13px; background: var(--bar); }
.cat h3 { flex: 1; margin-left: 22px; font-size: 18px; line-height: 24px; font-weight: 700; }
.tune { width: 20px; height: 18px; margin-right: 18px; color: var(--navy); }

.row { display: grid; grid-template-columns: 1fr auto 173px; align-items: center; padding-left: 11px; }
.row > :first-child { grid-column: 1; }
.row > :last-child { grid-column: 3; }
.in1 { padding-left: 33px; }
.in2 { padding-left: 55px; }
.edited label { font-style: italic; }
.marks { display: flex; gap: 16px; margin-right: 16px; color: var(--grey); }
.marks svg { width: 20px; height: 20px; }
.field {
  display: flex; align-items: center; height: 31px; padding: 0 7px 0 6px;
  border: 1px solid var(--line); border-radius: 2px; background: #fff;
}
.field input { flex: 1; min-width: 0; border: 0; background: none; outline: 0; }
.field span { color: #808080; }
.field.off { background: #f4f4f4; border-color: #808080; }
.field.off input { color: #808080; }
.field.focus { border-color: var(--blue); }
.field select { flex: 1; }
.field.menu { padding-right: 17px; }
.check {
  appearance: none; width: 31px; height: 31px;
  display: grid; place-items: center;
  border: 1px solid var(--line); border-radius: 2px; background: #fff;
}
.check:checked::after { content: ""; width: 9px; height: 5px; margin-bottom: 2px; border: solid #333; border-width: 0 0 1px 1px; transform: rotate(-45deg); }

.panel-foot { padding: 16px 15px 14px; border-top: 1px solid var(--line); }
.recommended {
  display: flex; align-items: center; height: 38px; padding: 0 17px;
  border: 1px solid var(--blue); background: #fff; color: var(--blue);
  font-size: 18px;
}
.recommended svg { color: inherit; margin-right: 9px; }
.grip { display: flex; justify-content: center; align-items: center; gap: 4px; height: 9px; border-top: 1px solid var(--line); background: var(--bar); }
.grip i { width: 4px; height: 1px; background: var(--line); }

/* Bottom strip */
.bottom {
  position: absolute; left: 0; right: 0; bottom: 20px; z-index: 1;
  display: grid; grid-template-columns: 1083fr 559fr 888fr 410px;
  align-items: end;
  padding: 0 26px 0 82px;
}
.objects { display: grid; justify-items: start; color: var(--grey); margin-bottom: -6px; }
.toggle { display: flex; align-items: center; gap: 17px; height: 20px; border: 0; background: none; margin: 0 0 5px 4px; }
.object { height: 38px; min-width: 236px; padding: 0 10px; border: 1px solid var(--line); background: #fff; }
.job { display: flex; align-items: center; gap: 16px; margin: 14px 0 12px 2px; }
.dims { margin-bottom: 18px; }
.views { display: flex; gap: 11px; margin-left: 1px; }

.save { grid-column: 4; height: 170px; padding: 24px 26px; border: 1px solid var(--line); border-radius: 4px; background: #fff; }
.line { display: flex; align-items: center; gap: 9px; height: 28px; margin-bottom: 14px; }
.line svg { color: var(--navy); }
.line .end { margin-left: auto; }
.strong { font-size: 18px; font-weight: 700; }
.save .primary { display: block; width: 100%; height: 39px; border: 0; background: var(--blue); color: #fff; font-size: 18px; }

.shade {
  position: absolute; left: 90px; right: 70px; bottom: 0; height: 42px; z-index: 2;
  background: linear-gradient(rgba(0, 0, 0, 0), rgba(0, 0, 0, .12));
  -webkit-mask-image: linear-gradient(90deg, transparent, #000 140px, #000 calc(100% - 140px), transparent);
  mask-image: linear-gradient(90deg, transparent, #000 140px, #000 calc(100% - 140px), transparent);
  pointer-events: none;
}
```
